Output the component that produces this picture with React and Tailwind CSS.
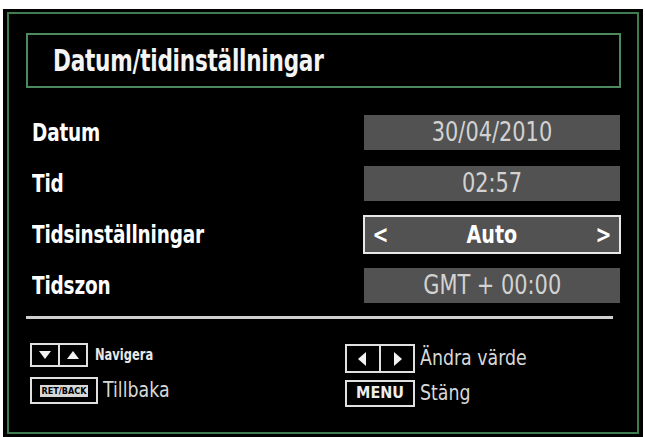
import React from "react";

const font = { fontFamily: '"DejaVu Sans Condensed", "DejaVu Sans", "Liberation Sans", sans-serif' };

function Row({ label, children }) {
  return (
    <div className="flex h-[51px] items-center">
      <div className="w-[332px]">
        <span className="inline-block origin-left scale-x-[0.82] text-[25px] font-bold tracking-[-0.2px] text-white">{label}</span>
      </div>
      {children}
    </div>
  );
}

function ValueBox({ children }) {
  return (
    <div className="flex h-[35px] w-[256px] items-center justify-center bg-[#525252]">
      <span className="inline-block scale-x-[0.86] text-[27px] text-[#d2d2d2]">{children}</span>
    </div>
  );
}

function Tri({ dir }) {
  const pts = {
    down: "2,3 14,3 8,11",
    up: "2,11 14,11 8,3",
    left: "11,2 11,16 3,9",
    right: "5,2 5,16 13,9",
  }[dir];
  const vb = dir === "left" || dir === "right" ? "0 0 16 18" : "0 0 16 14";
  return (
    <svg viewBox={vb} className={dir === "left" || dir === "right" ? "h-[18px] w-[16px]" : "h-[14px] w-[16px]"}>
      <polygon points={pts} fill="#f2f2f2" />
    </svg>
  );
}

export default function App() {
  return (
    <div className="h-[437px] w-[645px] bg-white pl-[3px] pr-[2px] pt-[9px]" style={font}>
      <div className="h-[428px] bg-black px-[4px] pt-[3px] pb-[3px]">
        <div className="h-[422px] border-2 border-[#3f7d50] bg-black pl-[17px] pr-[16px] pt-[19px]">
          <div className="flex h-[55px] items-center border-2 border-[#4c8a5e] pl-[25px]">
            <span className="inline-block origin-left scale-x-[0.8] text-[30px] font-bold tracking-[-0.3px] text-[#f4f4f4]">Datum/tidinställningar</span>
          </div>
          <div className="mt-[19px] pl-[6px]">
            <Row label="Datum">
              <ValueBox>30/04/2010</ValueBox>
            </Row>
            <Row label="Tid">
              <ValueBox>02:57</ValueBox>
            </Row>
            <Row label="Tidsinställningar">
              <div className="flex h-[39px] w-[258px] items-center justify-between border-2 border-[#e8e8e8] bg-[#525252] px-[6px] text-white">
                <span className="inline-block scale-x-[0.85] text-[25px] font-bold">&lt;</span>
                <span className="inline-block scale-x-[0.85] text-[25px] font-bold">Auto</span>
                <span className="inline-block scale-x-[0.85] text-[25px] font-bold">&gt;</span>
              </div>
            </Row>
            <Row label="Tidszon">
              <ValueBox>GMT + 00:00</ValueBox>
            </Row>
          </div>
          <div className="mt-[5px] h-[3px] w-[587px] bg-[#cfcfcf]" />
          <div className="mt-[24px] flex pl-[4px]">
            <div className="flex w-[315px] flex-col gap-[8px]">
              <div className="flex items-center gap-[7px]">
                <div className="flex h-[24px] w-[58px] border-2 border-[#e0e0e0]">
                  <div className="flex flex-1 items-center justify-center border-r-2 border-[#e0e0e0]"><Tri dir="down" /></div>
                  <div className="flex flex-1 items-center justify-center"><Tri dir="up" /></div>
                </div>
                <span className="inline-block origin-left scale-x-[0.85] text-[15px] font-bold text-[#e8e8e8]">Navigera</span>
              </div>
              <div className="flex items-center gap-[5px]">
                <div className="flex h-[27px] w-[68px] items-center justify-center border-2 border-[#e0e0e0]">
                  <span className="bg-[#d8d8d8] px-[2px] text-[9px] font-bold leading-[12px] text-black">RET/BACK</span>
                </div>
                <span className="inline-block origin-left scale-x-[0.92] text-[21px] text-[#d8d8d8]">Tillbaka</span>
              </div>
            </div>
            <div className="flex flex-col gap-[3px]">
              <div className="flex items-center gap-[5px]">
                <div className="flex h-[29px] w-[70px] border-2 border-[#e0e0e0]">
                  <div className="flex flex-1 items-center justify-center border-r-2 border-[#e0e0e0]"><Tri dir="left" /></div>
                  <div className="flex flex-1 items-center justify-center"><Tri dir="right" /></div>
                </div>
                <span className="inline-block origin-left scale-x-[0.92] text-[21px] text-[#d8d8d8]">Ändra värde</span>
              </div>
              <div className="flex items-center gap-[5px]">
                <div className="flex h-[27px] w-[70px] items-center justify-center border-2 border-[#e0e0e0]">
                  <span className="text-[16px] font-bold leading-[18px] text-[#eeeeee]">MENU</span>
                </div>
                <span className="inline-block origin-left scale-x-[0.92] text-[21px] text-[#d8d8d8]">Stäng</span>
              </div>
            </div>
          </div>
        </div>
      </div>
    </div>
  );
}
